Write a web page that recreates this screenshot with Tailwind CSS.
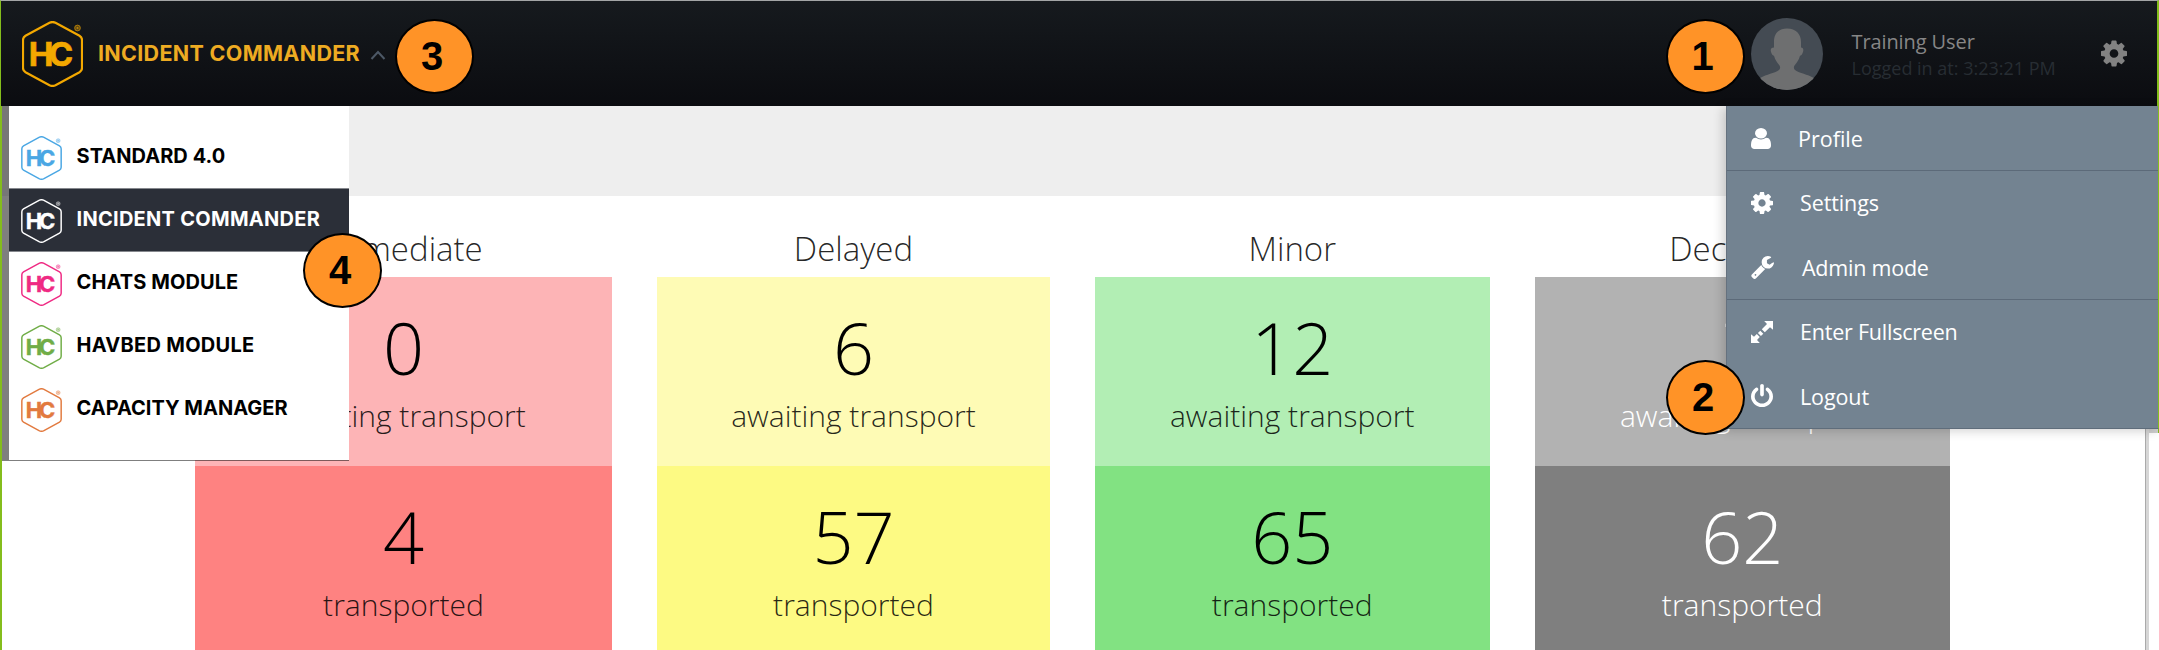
<!DOCTYPE html>
<html lang="en">
<head>
<meta charset="utf-8">
<title>Incident Commander</title>
<script src="https://cdn.jsdelivr.net/npm/@tailwindcss/browser@4"></script>
</head>
<body class="bg-white">
<!-- Shared symbols -->
<svg class="hidden">
  <symbol id="logo" viewBox="0 0 61 66">
    <path d="M27.500 1.800Q30.500 .300 33.500 1.800L57.500 14.800Q60 16.300 60 19V47Q60 49.700 57.500 51.200L33.500 64.200Q30.500 65.700 27.500 64.200L3.500 51.200Q1 49.700 1 47V19Q1 16.300 3.500 14.800Z" fill="none" stroke="currentColor" stroke-width="2.200"/>
    <text x="6.800 26.800" y="44.500" font-family="Inter, sans-serif" font-weight="700" font-size="33" fill="currentColor" stroke="currentColor" stroke-width=".6">HC</text>
    <circle cx="55.500" cy="7" r="2.900" fill="currentColor" fill-opacity=".35" stroke="currentColor" stroke-width=".8" stroke-opacity=".7"/>
    <circle cx="55.500" cy="7" r="1" fill="currentColor" fill-opacity=".6"/>
  </symbol>
  <symbol id="cog" viewBox="128 128 1536 1536"><path fill="currentColor" d="M1152 896q0-106-75-181t-181-75-181 75-75 181 75 181 181 75 181-75 75-181zm512-109v222q0 12-8 23t-20 13l-185 28q-19 54-39 91 35 50 107 138 10 12 10 25t-9 23q-27 37-99 108t-94 71q-12 0-26-9l-138-108q-44 23-91 38-16 136-29 186-7 28-36 28h-222q-14 0-24.500-8.500t-11.500-21.500l-28-184q-49-16-90-37l-141 107q-10 9-25 9-14 0-25-11-126-114-165-168-7-10-7-23 0-12 8-23 15-21 51-66.500t54-70.500q-27-50-41-99l-183-27q-13-2-21-12.500t-8-23.500v-222q0-12 8-23t19-13l186-28q14-46 39-92-40-57-107-138-10-12-10-24 0-10 9-23 26-36 98.500-107.500t94.500-71.500q13 0 26 10l138 107q44-23 91-38 16-136 29-186 7-28 36-28h222q14 0 24.500 8.500t11.500 21.500l28 184q49 16 90 37l142-107q9-9 24-9 13 0 25 10 129 119 165 170 7 8 7 22 0 12-8 23-15 21-51 66.500t-54 70.500q26 50 41 98l183 28q13 2 21 12.500t8 23.500z"/></symbol>
</svg>

<div class="relative flex h-[650px] w-[2159px] flex-col overflow-hidden bg-white font-['Open_Sans',sans-serif] text-black">

  <header class="flex h-[106px] shrink-0 items-center border-t border-r-2 border-l border-t-[#a3a5a6] border-r-[#84bd1c] border-l-[#84bd1c] bg-linear-to-b from-[#161a1e] to-[#0b0c10] pl-[21px]">
    <svg class="h-[66px] w-[61px] text-[#f3a800]"><use href="#logo"/></svg>
    <div class="ml-[15px] font-[Inter,sans-serif] text-[21.500px] font-bold leading-none tracking-[.31px] text-[#eeab22]">INCIDENT COMMANDER</div>
    <svg class="ml-[10px] mt-[2px] h-[10px] w-[16px]" viewBox="0 0 16 10" fill="none" stroke="#4c5866" stroke-width="2"><path d="M1.500 9 8 2l6.500 7"/></svg>
    <div class="ml-auto flex h-full items-center pr-[30px]">
      <svg class="h-[72px] w-[72px]" viewBox="0 0 72 72">
        <clipPath id="av"><circle cx="36" cy="36" r="36"/></clipPath>
        <g clip-path="url(#av)">
          <rect width="72" height="72" fill="#444b53"/>
          <path fill="#6e6f70" d="M36 10.500C45 10.500 50 16 50 24V29.500C52.500 29.500 52.800 32 51.800 34.500C51 37 50 37.500 49 37.800C48 42 45.500 45 43.500 47.500C42.500 49 42.800 51 44 52C49 55.500 56 56 63 60V73H9V60C16 56 23 55.500 28 52C29.200 51 29.500 49 28.500 47.500C26.500 45 24 42 23 37.800C22 37.500 21 37 20.200 34.500C19.200 32 19.500 29.500 23 29.500V24C23 16 27 10.500 36 10.500Z"/>
        </g>
      </svg>
      <div class="mt-[2px] ml-[28.500px] w-[249.500px]">
        <div class="text-[20px] leading-[27px] tracking-[-.1px] text-[#868686]">Training User</div>
        <div class="text-[18px] leading-[26px] text-[#272d33]">Logged in at: 3:23:21 PM</div>
      </div>
      <svg class="h-[27px] w-[26px] text-[#828282]"><use href="#cog"/></svg>
    </div>
  </header>

  <div class="h-[90px] shrink-0 bg-[#eeeeee]"></div>

  <main class="flex flex-1 gap-[45px] pt-[30px] pl-[195px] text-center font-light">
    <section class="flex w-[417px] flex-col">
      <h2 class="mb-[5px] text-[33px] leading-[46px] text-black/85">Immediate</h2>
      <div class="h-[189px] shrink-0 bg-[#fdb4b6] pt-[30px]"><div class="text-[72px] leading-[80px]">0</div><div class="mt-[9px] text-[30px] leading-[40px] text-black/85">awaiting transport</div></div>
      <div class="flex-1 bg-[#fe8281] pt-[30px]"><div class="text-[72px] leading-[80px]">4</div><div class="mt-[9px] text-[30px] leading-[40px] text-black/85">transported</div></div>
    </section>
    <section class="flex w-[393px] flex-col">
      <h2 class="mb-[5px] text-[33px] leading-[46px] text-black/85">Delayed</h2>
      <div class="h-[189px] shrink-0 bg-[#fefbb5] pt-[30px]"><div class="text-[72px] leading-[80px]">6</div><div class="mt-[9px] text-[30px] leading-[40px] text-black/85">awaiting transport</div></div>
      <div class="flex-1 bg-[#fdfa83] pt-[30px]"><div class="text-[72px] leading-[80px]">57</div><div class="mt-[9px] text-[30px] leading-[40px] text-black/85">transported</div></div>
    </section>
    <section class="flex w-[394.500px] flex-col">
      <h2 class="mb-[5px] text-[33px] leading-[46px] text-black/85">Minor</h2>
      <div class="h-[189px] shrink-0 bg-[#b2eeb4] pt-[30px]"><div class="text-[72px] leading-[80px]">12</div><div class="mt-[9px] text-[30px] leading-[40px] text-black/85">awaiting transport</div></div>
      <div class="flex-1 bg-[#82e282] pt-[30px]"><div class="text-[72px] leading-[80px]">65</div><div class="mt-[9px] text-[30px] leading-[40px] text-black/85">transported</div></div>
    </section>
    <section class="flex w-[415.500px] flex-col">
      <h2 class="mb-[5px] text-[33px] leading-[46px] text-black/85">Deceased</h2>
      <div class="h-[189px] shrink-0 bg-[#b2b2b2] pt-[30px] text-white"><div class="text-[72px] leading-[80px]">7</div><div class="mt-[9px] text-[30px] leading-[40px]">awaiting transport</div></div>
      <div class="flex-1 bg-[#7f7f7f] pt-[30px] text-white"><div class="text-[72px] leading-[80px]">62</div><div class="mt-[9px] text-[30px] leading-[40px]">transported</div></div>
    </section>
  </main>

  <!-- Window edges -->
  <div class="absolute top-[106px] bottom-0 left-0 w-[2px] bg-[#84bd1c]"></div>
  <div class="absolute top-[428px] bottom-0 left-[2145px] w-[4px] border-l border-[#aaaaaa] bg-[#d6d6d6]"></div>
  <div class="absolute top-[427px] left-[2149px] h-[6px] w-[10px] border-r border-[#84bd1c] bg-[#cfcfcf]"></div>

  <!-- Module switcher -->
  <nav class="absolute top-[106px] left-[2px] h-[355px] w-[347px] border-b border-l-7 border-black/50 bg-white bg-clip-padding pt-[19px] font-[Inter,sans-serif] text-[20px] font-bold leading-none">
    <div class="flex h-[63px] items-center pl-[12px]">
      <svg class="mt-[3px] mr-[14.500px] h-[44px] w-[41px] text-[#4aa7e4]"><use href="#logo"/></svg><span class="-mt-[2px] tracking-[.05px]">STANDARD 4.0</span>
    </div>
    <div class="flex h-[64px] items-center border-y border-[#85888d] bg-[#2b2f38] pl-[12px] text-white">
      <svg class="mt-px mr-[14.500px] h-[44px] w-[41px]"><use href="#logo"/></svg><span class="-mt-[3px] tracking-[.28px]">INCIDENT COMMANDER</span>
    </div>
    <div class="-mt-px flex h-[63px] items-center pl-[12px]">
      <svg class="mt-[3px] mr-[14.500px] h-[44px] w-[41px] text-[#ef2a83]"><use href="#logo"/></svg><span class="-mt-[2px] tracking-[.1px]">CHATS MODULE</span>
    </div>
    <div class="flex h-[63px] items-center pl-[12px]">
      <svg class="mt-[3px] mr-[14.500px] h-[44px] w-[41px] text-[#70ad47]"><use href="#logo"/></svg><span class="-mt-[2px] tracking-[.28px]">HAVBED MODULE</span>
    </div>
    <div class="flex h-[63px] items-center pl-[12px]">
      <svg class="mt-[3px] mr-[14.500px] h-[44px] w-[41px] text-[#e27a3f]"><use href="#logo"/></svg><span class="-mt-[2px]">CAPACITY MANAGER</span>
    </div>
  </nav>

  <!-- User menu -->
  <div class="absolute top-[106px] left-[1726px] flex h-[323px] w-[433px] flex-col border-r border-b border-l border-r-[#84bd1c] border-b-[#5f6d7b] border-l-[#65717e] bg-[#738391] pl-[24px] text-[21.500px] text-white shadow-[-3px_2px_10px_rgba(0,0,0,.18)]">
    <div class="-ml-6 flex h-[65px] items-center border-b border-[#5c6a79] pl-6">
      <svg class="h-[21px] w-[20px]" viewBox="256 128 1280 1536" preserveAspectRatio="none"><path fill="currentColor" d="M1536 1399q0 109-62.500 187t-150.500 78h-854q-88 0-150.500-78t-62.500-187q0-85 8.500-160.500t31.500-152 58.500-131 94-89 134.500-34.500q131 128 313 128t313-128q76 0 134.500 34.500t94 89 58.500 131 31.500 152 8.500 160.500zm-256-887q0 159-112.500 271.500t-271.500 112.500-271.500-112.500-112.500-271.500 112.500-271.500 271.500-112.500 271.500 112.500 112.500 271.500z"/></svg>
      <span class="mt-[2px] ml-[27px]">Profile</span>
    </div>
    <div class="flex h-[64px] items-center">
      <svg class="h-[22px] w-[22px]"><use href="#cog"/></svg>
      <span class="ml-[27px] tracking-[-.1px]">Settings</span>
    </div>
    <div class="-ml-6 flex h-[65px] items-center border-b border-[#5c6a79] pl-6">
      <svg class="h-[23px] w-[23px]" viewBox="60 128 1668 1642" preserveAspectRatio="none"><path fill="currentColor" d="M448 1472q0-26-19-45t-45-19-45 19-19 45 19 45 45 19 45-19 19-45zm644-420l-682 682q-37 37-90 37-52 0-91-37l-106-108q-38-36-38-90 0-53 38-91l681-681q39 98 114.500 173.500t173.500 114.500zm634-435q0 39-23 106-47 134-164.500 217.500t-258.500 83.500q-185 0-316.500-131.500t-131.500-316.500 131.500-316.500 316.500-131.500q58 0 121.500 16.500t107.500 46.500q16 11 16 28t-16 28l-293 169v224l193 107q5-3 79-48.500t135.500-81 70.500-35.500q15 0 23.500 10t8.500 25z"/></svg>
      <span class="mt-[2px] ml-[28px] tracking-[-.22px]">Admin mode</span>
    </div>
    <div class="flex h-[64px] items-center">
      <svg class="h-[22px] w-[22px]" viewBox="0 0 22 22" fill="currentColor"><path d="M13.200 0H22v8.800L19 6.200 13.800 11.200 10.800 8.200 16 3ZM8.800 22H0v-8.800L3 15.800 5.800 13 8.800 16 6 19ZM6.900 12 9.300 9.700 12.300 12.700 9.900 15Z"/></svg>
      <span class="ml-[27px] tracking-[-.22px]">Enter Fullscreen</span>
    </div>
    <div class="flex h-[64px] items-center">
      <svg class="mb-[2px] h-[23px] w-[22px]" viewBox="128 0 1536 1664" preserveAspectRatio="none"><path fill="currentColor" d="M1664 896q0 156-61 298t-164 245-245 164-298 61-298-61-245-164-164-245-61-298q0-182 80.500-343t226.500-270q43-32 95.500-25t83.500 50q32 42 24.500 94.500t-49.500 84.500q-98 74-151.500 181t-53.500 228q0 104 40.500 198.500t109.500 163.500 163.500 109.500 198.500 40.500 198.500-40.500 163.500-109.500 109.500-163.500 40.500-198.500q0-121-53.500-228t-151.500-181q-42-32-49.500-84.500t24.500-94.500q31-43 84-50t95 25q146 109 226.500 270t80.500 343zm-640-768v640q0 52-38 90t-90 38-90-38-38-90v-640q0-52 38-90t90-38 90 38 38 90z"/></svg>
      <span class="mt-[2px] ml-[27px] tracking-[-.1px]">Logout</span>
    </div>
  </div>

  <!-- Numbered callouts -->
  <div class="absolute top-[19px] left-[1666px] flex h-[75px] w-[79px] items-center justify-center rounded-[50%] border-2 border-black bg-[#ff9327] pr-[6px] pb-[2px] font-['Liberation_Sans',sans-serif] text-[40px] font-bold leading-none">1</div>
  <div class="absolute top-[360px] left-[1666px] flex h-[75px] w-[79px] items-center justify-center rounded-[50%] border-2 border-black bg-[#ff9327] pr-[5px] pb-[2px] font-['Liberation_Sans',sans-serif] text-[40px] font-bold leading-none">2</div>
  <div class="absolute top-[19px] left-[395px] flex h-[75px] w-[79px] items-center justify-center rounded-[50%] border-2 border-black bg-[#ff9327] pr-[5px] pb-[2px] font-['Liberation_Sans',sans-serif] text-[40px] font-bold leading-none">3</div>
  <div class="absolute top-[233px] left-[303px] flex h-[75px] w-[79px] items-center justify-center rounded-[50%] border-2 border-black bg-[#ff9327] pr-[5px] pb-[2px] font-['Liberation_Sans',sans-serif] text-[40px] font-bold leading-none">4</div>
</div>
</body>
</html>
